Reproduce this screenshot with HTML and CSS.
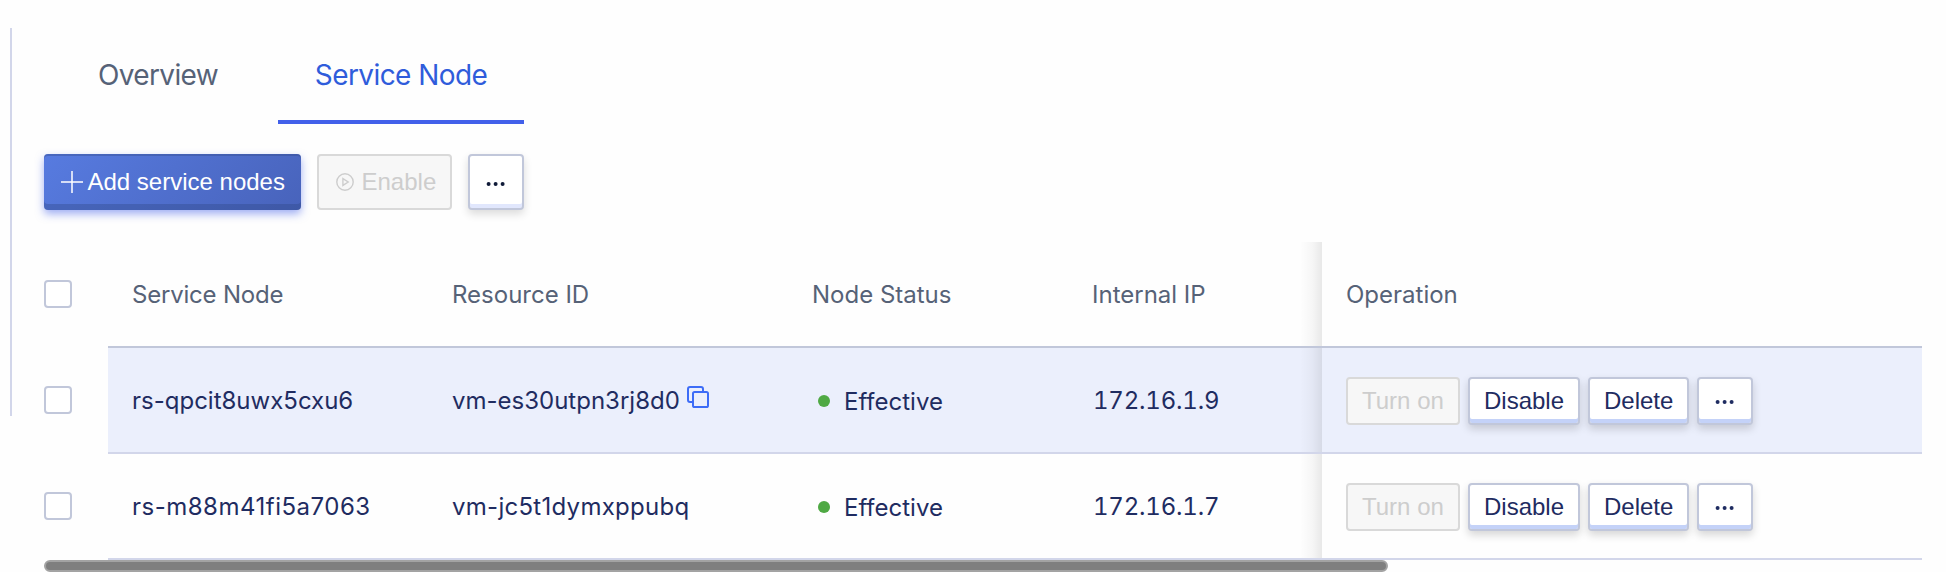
FILE: index.html
```html
<!DOCTYPE html>
<html lang="en">
<head>
<meta charset="utf-8">
<title>Service Node</title>
<link rel="stylesheet" href="styles.css">
</head>
<body>
<svg width="0" height="0" class="sprite">
  <symbol id="dots" viewBox="0 0 20 6"><circle cx="2.6" cy="3" r="2"/><circle cx="9.6" cy="3" r="2"/><circle cx="16.6" cy="3" r="2"/></symbol>
</svg>
<div class="page">
  <div class="rail"></div>
  <main class="panel">
    <nav class="tabs">
      <a class="tab"><span>Overview</span></a>
      <a class="tab active"><span>Service Node</span></a>
    </nav>
    <div class="toolbar">
      <button class="btn primary"><svg class="plus" viewBox="0 0 22 22"><path d="M11 0V22M0 11H22"/></svg><span>Add service nodes</span></button>
      <button class="btn disabled enable"><svg class="play" viewBox="0 0 18 18"><circle cx="9" cy="9" r="8.2"/><path d="M6.9 5.6L12.2 9L6.9 12.4Z"/></svg><span>Enable</span></button>
      <button class="btn plain more"><svg class="dots"><use href="#dots"/></svg></button>
    </div>
    <div class="table">
      <div class="row head">
        <div class="check"><i class="box"></i></div>
        <div class="cell"><span class="title">Service Node</span></div>
        <div class="cell"><span>Resource ID</span></div>
        <div class="cell"><span>Node Status</span></div>
        <div class="cell"><span>Internal IP</span></div>
        <div class="cell ops"><span>Operation</span></div>
      </div>
      <div class="row hover">
        <div class="check"><i class="box"></i></div>
        <div class="cell"><span>rs-qpcit8uwx5cxu6</span></div>
        <div class="cell"><span>vm-es30utpn3rj8d0</span><svg class="copy" viewBox="0 0 22 22"><path d="M5 16H3Q1 16 1 14V3Q1 1 3 1H14Q16 1 16 3V5"/><rect x="6" y="6" width="15" height="15" rx="1.6"/></svg></div>
        <div class="cell status"><i class="dot"></i><span class="eff">Effective</span></div>
        <div class="cell"><span class="ip">172.16.1.9</span></div>
        <div class="cell ops">
          <button class="btn small disabled turn"><span>Turn on</span></button>
          <button class="btn small plain disable"><span>Disable</span></button>
          <button class="btn small plain delete"><span>Delete</span></button>
          <button class="btn small plain more"><svg class="dots"><use href="#dots"/></svg></button>
        </div>
      </div>
      <div class="row">
        <div class="check"><i class="box"></i></div>
        <div class="cell"><span class="node-id">rs-m88m41fi5a7063</span></div>
        <div class="cell"><span class="vm-id">vm-jc5t1dymxppubq</span></div>
        <div class="cell status"><i class="dot"></i><span class="eff">Effective</span></div>
        <div class="cell"><span class="ip">172.16.1.7</span></div>
        <div class="cell ops">
          <button class="btn small disabled turn"><span>Turn on</span></button>
          <button class="btn small plain disable"><span>Disable</span></button>
          <button class="btn small plain delete"><span>Delete</span></button>
          <button class="btn small plain more"><svg class="dots"><use href="#dots"/></svg></button>
        </div>
      </div>
    </div>
    <div class="scrollbar"></div>
  </main>
</div>
</body>
</html>
```
FILE: styles.css
```css
* { box-sizing: border-box; }
body { margin: 0; background: #fefefe; font-family: Inter, sans-serif; color: #1f2c61; overflow: hidden; }
.sprite { display: block; }
.page { display: flex; height: 572px; padding-left: 10px; }
.rail { width: 2px; height: 388px; margin-top: 28px; background: #d2d6ea; }
.panel { width: 1878px; margin-left: 32px; }
.tabs { display: flex; height: 124px; padding-top: 28px; }
.tab { width: 234px; display: flex; justify-content: center; padding-top: 30px; font-size: 28px; line-height: 34px; letter-spacing: -.65px; color: #566277; white-space: nowrap; }
.tab:first-child { padding-right: 6px; }
.tab.active { width: 246px; letter-spacing: -.58px; color: #2f5cdb; border-bottom: 4px solid #4260ea; }
.toolbar { display: flex; gap: 16px; margin-top: 30px; }
.btn { display: flex; align-items: center; height: 56px; margin: 0; padding: 0 0 0 14px; border: 2px solid; border-radius: 4px; font: 24px "Liberation Sans", Arial, sans-serif; white-space: nowrap; }
.primary { width: 257px; color: #fff; border: 0; padding-left: 17px; background: linear-gradient(135deg, #577be0, #4863bb); box-shadow: inset 0 -6px rgba(45, 70, 130, .35), inset 0 2px rgba(45, 70, 130, .35), 0 4px 8px rgba(66, 96, 234, .5); }
.plus { width: 22px; height: 22px; margin-right: 4.5px; stroke: #fff; stroke-width: 1.5; fill: none; }
.disabled { background: #f7f7f7; border-color: #d9d9d9; color: #cdcdcd; }
.enable { width: 135px; padding-left: 17px; }
.play { width: 18px; height: 18px; margin-right: 7.5px; stroke: #cdcdcd; stroke-width: 1.4; fill: none; }
.plain { background: #fff; border-color: #c1c7da; color: #1f2c61; box-shadow: inset 0 -4px #e1e7fd, 0 4px 8px rgba(0, 0, 0, .14); }
.more { width: 56px; padding-left: 16px; }
.dots { width: 20px; height: 6px; margin-top: 4px; fill: #101b38; }
.table { margin-top: 32px; }
.row { display: grid; grid-template-columns: 64px 320px 360px 280px 254px 600px; height: 106px; }
.check { display: flex; align-items: center; padding-bottom: 2px; }
.box { width: 28px; height: 28px; border: 2px solid #c1c7da; border-radius: 4px; background: #fff; }
.cell { display: flex; align-items: center; padding-left: 24px; font-size: 24px; white-space: nowrap; border-bottom: 2px solid #d2d6ea; }
.head .cell { color: #566277; border-color: #c1c7da; }
.title { letter-spacing: -.2px; }
.hover .cell { background: #ebeffc; }
.node-id { letter-spacing: .5px; }
.vm-id { letter-spacing: .28px; }
.ip { margin-left: 1px; font-variant-numeric: tabular-nums; letter-spacing: -.2px; }
.ops { position: relative; gap: 8px; }
.ops::before { content: ""; position: absolute; right: 100%; top: 0; bottom: 0; width: 22px; background: linear-gradient(to left, rgba(0, 0, 0, .085), rgba(0, 0, 0, .03) 45%, transparent); }
.status { padding-left: 30px; }
.dot { width: 12px; height: 12px; margin-top: 2px; margin-right: 14px; border-radius: 50%; background: #4fa944; }
.eff { margin-top: 2px; }
.copy { width: 22px; height: 22px; margin: -6px 0 0 7px; fill: none; stroke: #3d6cf7; stroke-width: 2; }
.small { height: 48px; margin-top: 2px; }
.small.plain { box-shadow: inset 0 -4px #c4d2f8, 0 4px 8px rgba(0, 0, 0, .16); }
.small .dots { margin-top: 2px; fill: #1f2c61; }
.turn { width: 114px; }
.disable { width: 112px; }
.delete { width: 101px; }
.scrollbar { width: 1344px; height: 12px; background: #7f7f7f; border: 2px solid #a3a3a3; border-radius: 6px; }
```
